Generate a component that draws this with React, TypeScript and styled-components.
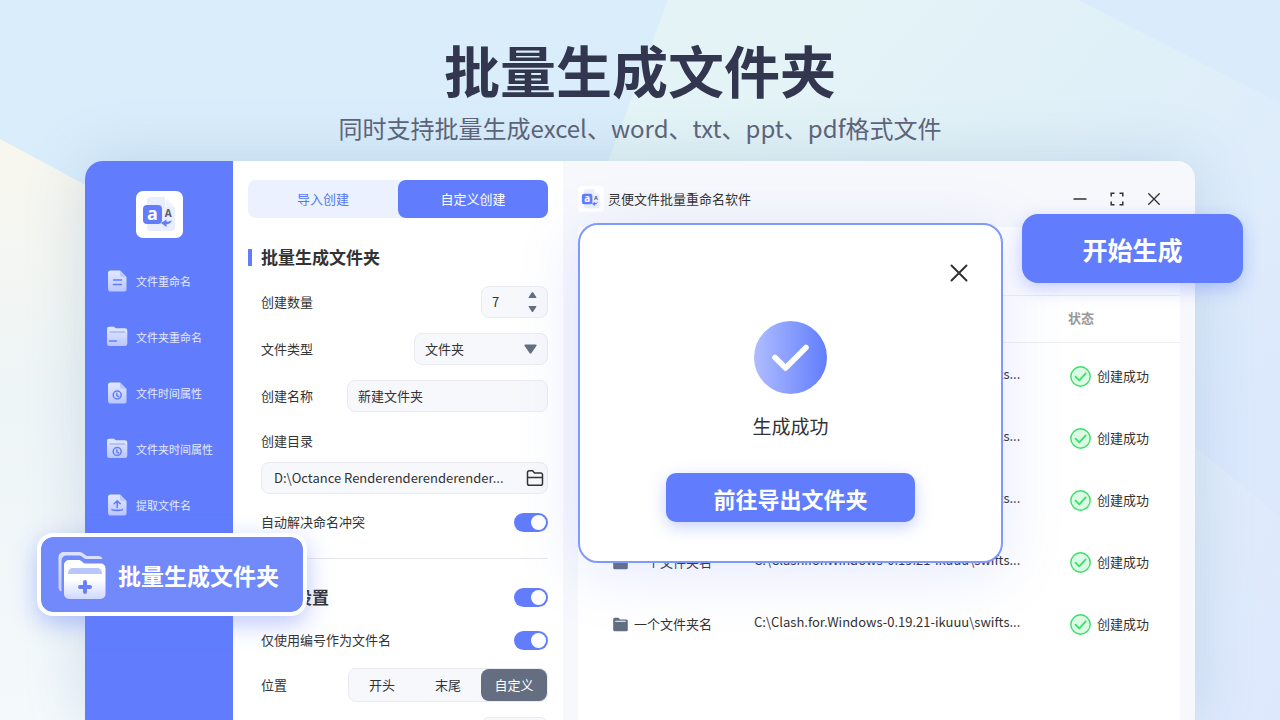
import React from "react";
import styled, { createGlobalStyle, css } from "styled-components";

const brand = "#617dfd";
const ink = "#333333";
const slate = "#646e80";
const fieldBg = "#f7f8fc";
const fieldLine = "#e9ebf0";

const GlobalStyle = createGlobalStyle`
  * { box-sizing: border-box; }
  body {
    margin: 0;
    font-family: "Noto Sans CJK SC", "Noto Sans", sans-serif;
    font-size: 13px;
    line-height: 20px;
    color: ${ink};
  }
  button, input, select { font: inherit; color: inherit; }
  h1, h2, h3, p { margin: 0; }
`;

const Page = styled.div`
  position: relative;
  height: 100vh;
  overflow: hidden;
  display: flex;
  flex-direction: column;
  background: #dbecfb;
`;

const Backdrop = styled.svg`
  position: absolute;
  inset: 0;
  width: 100%;
  height: 100%;
`;

const Hero = styled.header`
  position: relative;
  padding-top: 30px;
  text-align: center;
`;

const Title = styled.h1`
  font-size: 56px;
  line-height: 77px;
  font-weight: 700;
  color: #32364f;
`;

const Subtitle = styled.p`
  margin-top: 3px;
  font-size: 24px;
  line-height: 36px;
  color: #5d6379;
`;

const Window = styled.div`
  position: relative;
  flex: 1;
  min-height: 0;
  margin: 15px 85px 0;
  display: flex;
  border-radius: 18px 18px 0 0;
  background: ${fieldBg};
  box-shadow: 0 0 60px rgba(92, 140, 180, 0.24);
`;

const Sidebar = styled.nav`
  width: 148px;
  flex: none;
  display: flex;
  flex-direction: column;
  align-items: center;
  padding-top: 30px;
  border-radius: 18px 0 0 0;
  background: ${brand};
`;

const NavList = styled.ul`
  list-style: none;
  margin: 15px 0 0;
  padding: 0 0 0 21px;
  width: 100%;
`;

const NavLink = styled.a`
  display: flex;
  align-items: center;
  gap: 8px;
  height: 56px;
  font-size: 11px;
  white-space: nowrap;
  text-decoration: none;
  color: #e6eaff;
`;

const Panel = styled.section`
  width: 330px;
  flex: none;
  overflow: hidden;
  padding: 19px 15px 0;
  background: #fff;
`;

const Tabs = styled.div`
  display: flex;
  height: 38px;
  border-radius: 8px;
  background: #ebf1ff;
`;

const Tab = styled.button<{ $active?: boolean }>`
  flex: 1;
  border: 0;
  border-radius: 8px;
  background: ${(p) => (p.$active ? brand : "transparent")};
  color: ${(p) => (p.$active ? "#fff" : "#5577f5")};
`;

const SectionTitle = styled.h2<{ $marked?: boolean }>`
  display: flex;
  align-items: center;
  gap: 9px;
  font-size: 17px;
  line-height: 26px;
  font-weight: 700;
  ${(p) =>
    p.$marked &&
    css`
      margin-top: 26px;
      &::before {
        content: "";
        width: 4px;
        height: 17px;
        background: ${brand};
      }
    `}
`;

const Form = styled.form`
  display: flex;
  flex-direction: column;
  padding: 16px 0 0 13px;
`;

const Fields = styled.div`
  display: flex;
  flex-direction: column;
  gap: 15px;
`;

const Row = styled.div<{ $top?: number }>`
  display: flex;
  flex: none;
  align-items: center;
  justify-content: space-between;
  margin-top: ${(p) => p.$top ?? 0}px;
`;

const Field = styled.div<{ $width?: string }>`
  display: flex;
  flex: none;
  align-items: center;
  width: ${(p) => p.$width ?? "100%"};
  height: 32px;
  padding: 0 10px;
  border: 1px solid ${fieldLine};
  border-radius: 8px;
  background: ${fieldBg};
`;

const TextInput = styled.input`
  flex: 1;
  min-width: 0;
  width: 100%;
  padding: 0;
  border: 0;
  outline: 0;
  background: transparent;
`;

const Select = styled.select`
  flex: 1;
  padding: 0;
  border: 0;
  outline: 0;
  appearance: none;
  background: transparent;
`;

const Stepper = styled.div`
  display: flex;
  flex-direction: column;
  gap: 6px;
`;

const IconButton = styled.button`
  display: flex;
  padding: 0;
  border: 0;
  background: none;
`;

const DirectoryField = styled(Field)`
  margin-top: 11px;
  padding: 0 3px 0 12px;
`;

const Divider = styled.hr`
  width: 100%;
  height: 1px;
  margin: 26px 0 0;
  border: 0;
  background: #e4e6ea;
`;

const Switch = styled.input`
  appearance: none;
  display: flex;
  align-items: center;
  justify-content: flex-end;
  width: 34px;
  height: 19px;
  margin: 0;
  padding: 0 2px;
  border-radius: 10px;
  background: ${brand};
  &::before {
    content: "";
    width: 15px;
    height: 15px;
    border-radius: 50%;
    background: #fff;
  }
`;

const Segmented = styled.div`
  display: flex;
  width: 200px;
  height: 34px;
  border: 1px solid ${fieldLine};
  border-radius: 8px;
  background: ${fieldBg};
`;

const Segment = styled.label`
  flex: 1;
  display: flex;
  align-items: center;
  justify-content: center;
  border-radius: 8px;
  &:has(input:checked) {
    background: ${slate};
    color: #fff;
  }
  input {
    appearance: none;
    width: 0;
    margin: 0;
  }
`;

const Main = styled.main`
  position: relative;
  flex: 1;
  min-width: 0;
  display: flex;
  flex-direction: column;
  padding: 25px 15px 0;
`;

const TitleBar = styled.div`
  display: flex;
  align-items: center;
  gap: 4px;
  padding-right: 19px;
`;

const AppName = styled.span`
  flex: 1;
`;

const WindowControls = styled.div`
  display: flex;
  gap: 23px;
`;

const Card = styled.div`
  flex: 1;
  min-height: 0;
  overflow: hidden;
  margin-top: 15px;
  padding-top: 68px;
  background: #fff;
`;

const Table = styled.table`
  width: 100%;
  table-layout: fixed;
  border-collapse: separate;
  border-spacing: 0;
  th, td { padding: 0; text-align: left; }
  th {
    height: 48px;
    padding-bottom: 2px;
    border: solid #eeeff2;
    border-width: 1px 0;
    font-weight: 700;
    color: #999;
  }
  td { height: 62px; white-space: nowrap; }
  tbody::before {
    content: "";
    display: table-row;
    height: 2px;
  }
`;

const NameColumn = styled.col`
  width: 176px;
`;

const StatusColumn = styled.col`
  width: 112px;
`;

const Cell = styled.div<{ $indent: number }>`
  display: flex;
  align-items: center;
  gap: 6px;
  padding-left: ${(p) => p.$indent}px;
`;

const PathCell = styled.div`
  padding-bottom: 4px;
`;

const Dialog = styled.div`
  position: absolute;
  top: 62px;
  left: 15px;
  width: 425px;
  height: 340px;
  display: flex;
  flex-direction: column;
  align-items: center;
  padding-top: 38px;
  border: 2px solid #8099fc;
  border-radius: 20px;
  background: #fff;
  box-shadow: 0 10px 60px rgba(97, 125, 253, 0.17);
`;

const DialogClose = styled(IconButton)`
  align-self: flex-end;
  margin-right: 32px;
`;

const SuccessMark = styled.svg`
  margin-top: 38px;
`;

const DialogText = styled.p`
  margin-top: 18px;
  font-size: 19px;
  line-height: 28px;
`;

const ExportButton = styled.button`
  width: 249px;
  height: 49px;
  margin-top: 33px;
  border: 0;
  border-radius: 10px;
  background: ${brand};
  box-shadow: 0 5px 16px rgba(97, 125, 253, 0.35);
  font-size: 22px;
  font-weight: 700;
  color: #fff;
`;

const StartButton = styled.button`
  position: absolute;
  top: 214px;
  right: 37px;
  width: 221px;
  height: 69px;
  border: 0;
  border-radius: 16px;
  background: ${brand};
  box-shadow: 0 6px 18px rgba(97, 125, 253, 0.38);
  font-size: 25px;
  font-weight: 700;
  color: #fff;
`;

const CreateButton = styled.button`
  position: absolute;
  top: 533px;
  left: 37px;
  width: 270px;
  height: 83px;
  display: flex;
  align-items: center;
  gap: 12px;
  padding: 0 0 0 17px;
  border: 4px solid #fff;
  border-radius: 16px;
  background: #7189fb;
  background-clip: padding-box;
  box-shadow: 0 8px 24px rgba(97, 125, 253, 0.42);
  font-size: 23px;
  font-weight: 700;
  white-space: nowrap;
  color: #fff;
`;

const AppLogo = ({ size }: { size: number }) => (
  <svg width={size} height={size} viewBox="0 0 47 47" aria-hidden="true">
    <rect width="47" height="47" rx="7" fill="#fff" />
    <path d="M14 6h15l10 10v21a3 3 0 0 1-3 3H14a3 3 0 0 1-3-3V9a3 3 0 0 1 3-3z" fill="#e9eeff" />
    <path d="M29 6l10 10h-7a3 3 0 0 1-3-3z" fill="#fff" />
    <path d="M30 8l8 8h-6a2 2 0 0 1-2-2z" fill="#eff2ff" />
    <rect x="7" y="14" width="19" height="19" rx="4" fill={brand} />
    <text x="16.500" y="29" textAnchor="middle" fontFamily="Noto Sans" fontSize="18" fontWeight="700" fill="#fff">a</text>
    <text x="32.300" y="25.500" textAnchor="middle" fontFamily="Noto Sans" fontSize="10" fontWeight="700" fill="#555b6b">A</text>
    <path d="M36 29c-1 3-3 4-5.500 4.300v2.700L25 32l5.500-3.600v2.400c2 0 4-.6 5.500-1.800z" fill={brand} />
  </svg>
);

const DocShape = ({ children }: { children: React.ReactNode }) => (
  <svg width="22" height="22" viewBox="0 0 22 22" fill="none" aria-hidden="true">
    <path d="M5 .5h9l6.500 6.500v12a2.500 2.500 0 0 1-2.500 2.500H5A2.500 2.500 0 0 1 2 19V3A2.500 2.500 0 0 1 5 .5z" fill="url(#navFill)" />
    <path d="M14 .5L20.500 7h-4A2.500 2.500 0 0 1 14 4.500z" fill="#bcc8ff" />
    {children}
  </svg>
);

const FolderShape = ({ children }: { children: React.ReactNode }) => (
  <svg width="22" height="22" viewBox="0 0 22 22" fill="none" aria-hidden="true">
    <path d="M3.300 .8h4.600l2 1.500h9.100a2.300 2.300 0 0 1 2.300 2.300v13.200a2.300 2.300 0 0 1-2.300 2.300H3.300A2.300 2.300 0 0 1 1 17.800V3.100A2.300 2.300 0 0 1 3.300 .8z" fill="url(#navFill)" />
    <path d="M3 7a2 2 0 0 1 2-2h12.500a2 2 0 0 1 2 2z" fill="#b3c1ff" />
    {children}
  </svg>
);

const Clock = ({ cy }: { cy: number }) => (
  <g stroke={brand} strokeWidth="1.500" strokeLinecap="round">
    <circle cx="11.200" cy={cy} r="4" />
    <path d={`M10.800 ${cy - 1.8}v2.200l1.800 1.200`} />
  </g>
);

const navItems = [
  {
    label: "文件重命名",
    icon: <DocShape><path d="M7.500 10h8M7.500 14.500h8" stroke={brand} strokeWidth="1.500" strokeLinecap="round" /></DocShape>,
  },
  {
    label: "文件夹重命名",
    icon: <FolderShape><path d="M3.500 15h7" stroke={brand} strokeWidth="1.500" strokeLinecap="round" /></FolderShape>,
  },
  { label: "文件时间属性", icon: <DocShape><Clock cy={13} /></DocShape> },
  { label: "文件夹时间属性", icon: <FolderShape><Clock cy={13.5} /></FolderShape> },
  {
    label: "提取文件名",
    icon: (
      <DocShape>
        <path d="M11.200 13.500V7.200M8.200 9.800l3-3 3 3M6 15.500c0 1.300 10.400 1.300 10.400 0" stroke={brand} strokeWidth="1.500" strokeLinecap="round" strokeLinejoin="round" />
      </DocShape>
    ),
  },
];

const Arrow = ({ down }: { down?: boolean }) => (
  <svg width="9" height="8" viewBox="0 0 9 8" aria-hidden="true">
    <path
      d={down ? "M1.300 1h6.400q1.300 0 .5 1.100L5.300 6.500q-.8 1-1.600 0L.8 2.100Q0 1 1.300 1z" : "M1.300 7h6.400q1.300 0 .5-1.100L5.300 1.500q-.8-1-1.600 0L.8 5.900Q0 7 1.300 7z"}
      fill={slate}
    />
  </svg>
);

const FolderOutline = () => (
  <svg width="18" height="18" viewBox="0 0 18 18" fill="none" stroke={ink} strokeWidth="1.500" strokeLinejoin="round" aria-hidden="true">
    <path d="M1.500 14.500v-11A1.800 1.800 0 0 1 3.300 1.700h3.300l2 2.300h6.100a1.800 1.800 0 0 1 1.800 1.800v8.700a1.800 1.800 0 0 1-1.800 1.800H3.300a1.800 1.800 0 0 1-1.800-1.800zM1.500 8.500h15" />
  </svg>
);

const RowFolder = () => (
  <svg width="15" height="15" viewBox="0 0 15 15" aria-hidden="true">
    <path d="M1.500.8h4l1.600 1.700h6.200A1.500 1.500 0 0 1 14.800 4v8.800a1.500 1.500 0 0 1-1.500 1.500H1.700a1.500 1.500 0 0 1-1.500-1.500V2.300A1.500 1.500 0 0 1 1.500.8z" fill={slate} />
    <path d="M2 4.800q0-1 1-1h9q1 0 1 1z" fill="#fff" />
  </svg>
);

const StatusTick = () => (
  <svg width="21" height="21" viewBox="0 0 21 21" fill="none" stroke="#37e268" aria-hidden="true">
    <circle cx="10.500" cy="10.500" r="9.700" fill="#dcfbe5" strokeWidth="1.400" />
    <path d="M5.500 10.600l3.800 3.800 6.400-7" strokeWidth="1.800" strokeLinecap="round" strokeLinejoin="round" />
  </svg>
);

const StackedFolders = () => (
  <svg width="48" height="48" viewBox="0 0 48 48" fill="none" aria-hidden="true">
    <defs>
      <linearGradient id="folderFill" x1="0" y1="0" x2="0" y2="1">
        <stop offset="0.500" stopColor="#fff" />
        <stop offset="1" stopColor="#cfd8ff" />
      </linearGradient>
      <linearGradient id="backFill" x1="0" y1="0" x2="0" y2="1">
        <stop offset="0" stopColor="#dde3ff" />
        <stop offset="1" stopColor="#c2cdff" />
      </linearGradient>
    </defs>
    <path d="M3.500 40.500C1.500 40 .5 38.500.5 36V6A5 5 0 0 1 5.500 1h16c2 0 3 .7 4.500 2 1.500 1.500 2.500 2 4.500 2H40c2.500 0 4 1 4.500 3H29c-2 0-3-.5-4.500-2S22 4.500 20 4.500H8.500a5 5 0 0 0-5 5z" fill="url(#backFill)" />
    <path d="M11 9h9c2 0 3 .6 4.300 2s2.300 1.600 4.200 1.600H43a4.500 4.500 0 0 1 4.500 4.500V43a5 5 0 0 1-5 5H11a5 5 0 0 1-5-5V14a5 5 0 0 1 5-5z" fill="url(#folderFill)" />
    <path d="M10 23c0-3.500 1.500-6 5-6h24c3.500 0 5 2.500 5 6z" fill="#bac7fe" />
    <path d="M27 31v10M22 36h10" stroke="#6680f8" strokeWidth="4" strokeLinecap="round" />
  </svg>
);

const Cross = ({ size, weight }: { size: number; weight: number }) => (
  <svg width={size} height={size} viewBox="0 0 20 20" fill="none" stroke={ink} strokeWidth={weight} strokeLinecap="round" aria-hidden="true">
    <path d="M2.500 2.500l15 15M17.500 2.500l-15 15" />
  </svg>
);

const rows = [1, 2, 3, 4, 5];

export default function App() {
  return (
    <Page>
      <GlobalStyle />
      <Backdrop viewBox="0 0 1280 720" preserveAspectRatio="none" aria-hidden="true">
        <defs>
          <linearGradient id="navFill" x1="0" y1="0" x2="0" y2="1">
            <stop offset="0" stopColor="#e4e9ff" />
            <stop offset="1" stopColor="#b9c6ff" />
          </linearGradient>
          <linearGradient id="skyTop" x1="0" y1="0" x2="0" y2="1">
            <stop offset="0" stopColor="#d9edfb" />
            <stop offset="1" stopColor="#dcecfa" />
          </linearGradient>
          <linearGradient id="mint" gradientUnits="userSpaceOnUse" x1="760" y1="0" x2="1240" y2="420">
            <stop offset="0" stopColor="#e4f4f6" />
            <stop offset="0.500" stopColor="#e0f0f8" />
            <stop offset="1" stopColor="#dce9fd" />
          </linearGradient>
          <linearGradient id="cream" x1="0" y1="0" x2="0" y2="1">
            <stop offset="0" stopColor="#f8f7ee" />
            <stop offset="0.450" stopColor="#eef5f7" />
            <stop offset="1" stopColor="#f4f9fc" />
          </linearGradient>
          <linearGradient id="corner" x1="0" y1="0" x2="1" y2="1">
            <stop offset="0" stopColor="#e2eff9" />
            <stop offset="1" stopColor="#dde8fe" />
          </linearGradient>
        </defs>
        <rect width="1280" height="720" fill="url(#skyTop)" />
        <path d="M668 0H1280V720H400z" fill="url(#mint)" />
        <path d="M1078 0H1280V103z" fill="#daecfb" />
        <path d="M1150 410L1280 517V720H1150z" fill="url(#corner)" />
        <path d="M0 139L300 300V720H0z" fill="url(#cream)" />
      </Backdrop>

      <Hero>
        <Title>批量生成文件夹</Title>
        <Subtitle>同时支持批量生成excel、word、txt、ppt、pdf格式文件</Subtitle>
      </Hero>

      <Window>
        <Sidebar>
          <AppLogo size={47} />
          <NavList>
            {navItems.map((item) => (
              <li key={item.label}>
                <NavLink href="#">{item.icon}{item.label}</NavLink>
              </li>
            ))}
          </NavList>
        </Sidebar>

        <Panel>
          <Tabs>
            <Tab type="button">导入创建</Tab>
            <Tab type="button" $active>自定义创建</Tab>
          </Tabs>
          <SectionTitle $marked>批量生成文件夹</SectionTitle>
          <Form>
            <Fields>
              <Row>
                <label htmlFor="count">创建数量</label>
                <Field $width="67px">
                  <TextInput id="count" inputMode="numeric" defaultValue="7" />
                  <Stepper>
                    <IconButton type="button" aria-label="增加"><Arrow /></IconButton>
                    <IconButton type="button" aria-label="减少"><Arrow down /></IconButton>
                  </Stepper>
                </Field>
              </Row>
              <Row>
                <label htmlFor="kind">文件类型</label>
                <Field $width="134px">
                  <Select id="kind" defaultValue="文件夹">
                    <option>文件夹</option>
                  </Select>
                  <svg width="13" height="10" viewBox="0 0 13 10" aria-hidden="true">
                    <path d="M1.500.5h10q1.800 0 .8 1.500L7.500 8.900q-1 1.300-2 0L.7 2Q-.3.500 1.500.5z" fill={slate} />
                  </svg>
                </Field>
              </Row>
              <Row>
                <label htmlFor="name">创建名称</label>
                <Field $width="201px">
                  <TextInput id="name" defaultValue="新建文件夹" />
                </Field>
              </Row>
            </Fields>
            <Row $top={19}>
              <label htmlFor="directory">创建目录</label>
            </Row>
            <DirectoryField>
              <TextInput id="directory" readOnly value="D:\Octance Renderenderenderender..." />
              <IconButton type="button" aria-label="选择目录"><FolderOutline /></IconButton>
            </DirectoryField>
            <Row $top={18}>
              <label htmlFor="conflict">自动解决命名冲突</label>
              <Switch id="conflict" type="checkbox" defaultChecked />
            </Row>
            <Divider />
            <Row $top={25}>
              <SectionTitle>编号设置</SectionTitle>
              <Switch type="checkbox" aria-label="编号设置" defaultChecked />
            </Row>
            <Row $top={20}>
              <label htmlFor="only">仅使用编号作为文件名</label>
              <Switch id="only" type="checkbox" defaultChecked />
            </Row>
            <Row $top={18}>
              <span>位置</span>
              <Segmented role="radiogroup" aria-label="位置">
                <Segment><input type="radio" name="place" />开头</Segment>
                <Segment><input type="radio" name="place" />末尾</Segment>
                <Segment><input type="radio" name="place" defaultChecked />自定义</Segment>
              </Segmented>
            </Row>
            <Row $top={15}>
              <span />
              <Field $width="67px">
                <TextInput aria-label="自定义位置" />
              </Field>
            </Row>
          </Form>
        </Panel>

        <Main>
          <TitleBar>
            <AppLogo size={26} />
            <AppName>灵便文件批量重命名软件</AppName>
            <WindowControls>
              <IconButton type="button" aria-label="最小化">
                <svg width="14" height="14" viewBox="0 0 14 14" stroke={ink} strokeWidth="1.500" strokeLinecap="round"><path d="M1 7h12" /></svg>
              </IconButton>
              <IconButton type="button" aria-label="最大化">
                <svg width="14" height="14" viewBox="0 0 14 14" fill="none" stroke={ink} strokeWidth="1.500"><path d="M1.200 4.500V1.200h3.300M9.500 1.200h3.300v3.300M12.800 9.500v3.300H9.500M4.500 12.800H1.200V9.500" /></svg>
              </IconButton>
              <IconButton type="button" aria-label="关闭">
                <Cross size={14} weight={2} />
              </IconButton>
            </WindowControls>
          </TitleBar>
          <Card>
            <Table>
              <colgroup>
                <NameColumn />
                <col />
                <StatusColumn />
              </colgroup>
              <thead>
                <tr>
                  <th />
                  <th />
                  <th>状态</th>
                </tr>
              </thead>
              <tbody>
                {rows.map((row) => (
                  <tr key={row}>
                    <td><Cell $indent={35}><RowFolder />一个文件夹名</Cell></td>
                    <td><PathCell>C:\Clash.for.Windows-0.19.21-ikuuu\swifts...</PathCell></td>
                    <td><Cell $indent={2}><StatusTick />创建成功</Cell></td>
                  </tr>
                ))}
              </tbody>
            </Table>
          </Card>

          <Dialog role="dialog" aria-label="生成成功">
            <DialogClose type="button" aria-label="关闭">
              <Cross size={20} weight={2} />
            </DialogClose>
            <SuccessMark width="73" height="73" viewBox="0 0 73 73" fill="none" aria-hidden="true">
              <defs>
                <linearGradient id="markFill" x1="0" y1="0" x2="1" y2="0">
                  <stop offset="0" stopColor="#afbdff" />
                  <stop offset="1" stopColor="#617dfd" />
                </linearGradient>
              </defs>
              <circle cx="36.500" cy="36.500" r="36.500" fill="url(#markFill)" />
              <path d="M21 36.500l10.500 10.500L52 26.500" stroke="#fff" strokeWidth="5.500" strokeLinecap="round" strokeLinejoin="round" />
            </SuccessMark>
            <DialogText>生成成功</DialogText>
            <ExportButton type="button">前往导出文件夹</ExportButton>
          </Dialog>
        </Main>
      </Window>

      <StartButton type="button">开始生成</StartButton>
      <CreateButton type="button"><StackedFolders />批量生成文件夹</CreateButton>
    </Page>
  );
}
